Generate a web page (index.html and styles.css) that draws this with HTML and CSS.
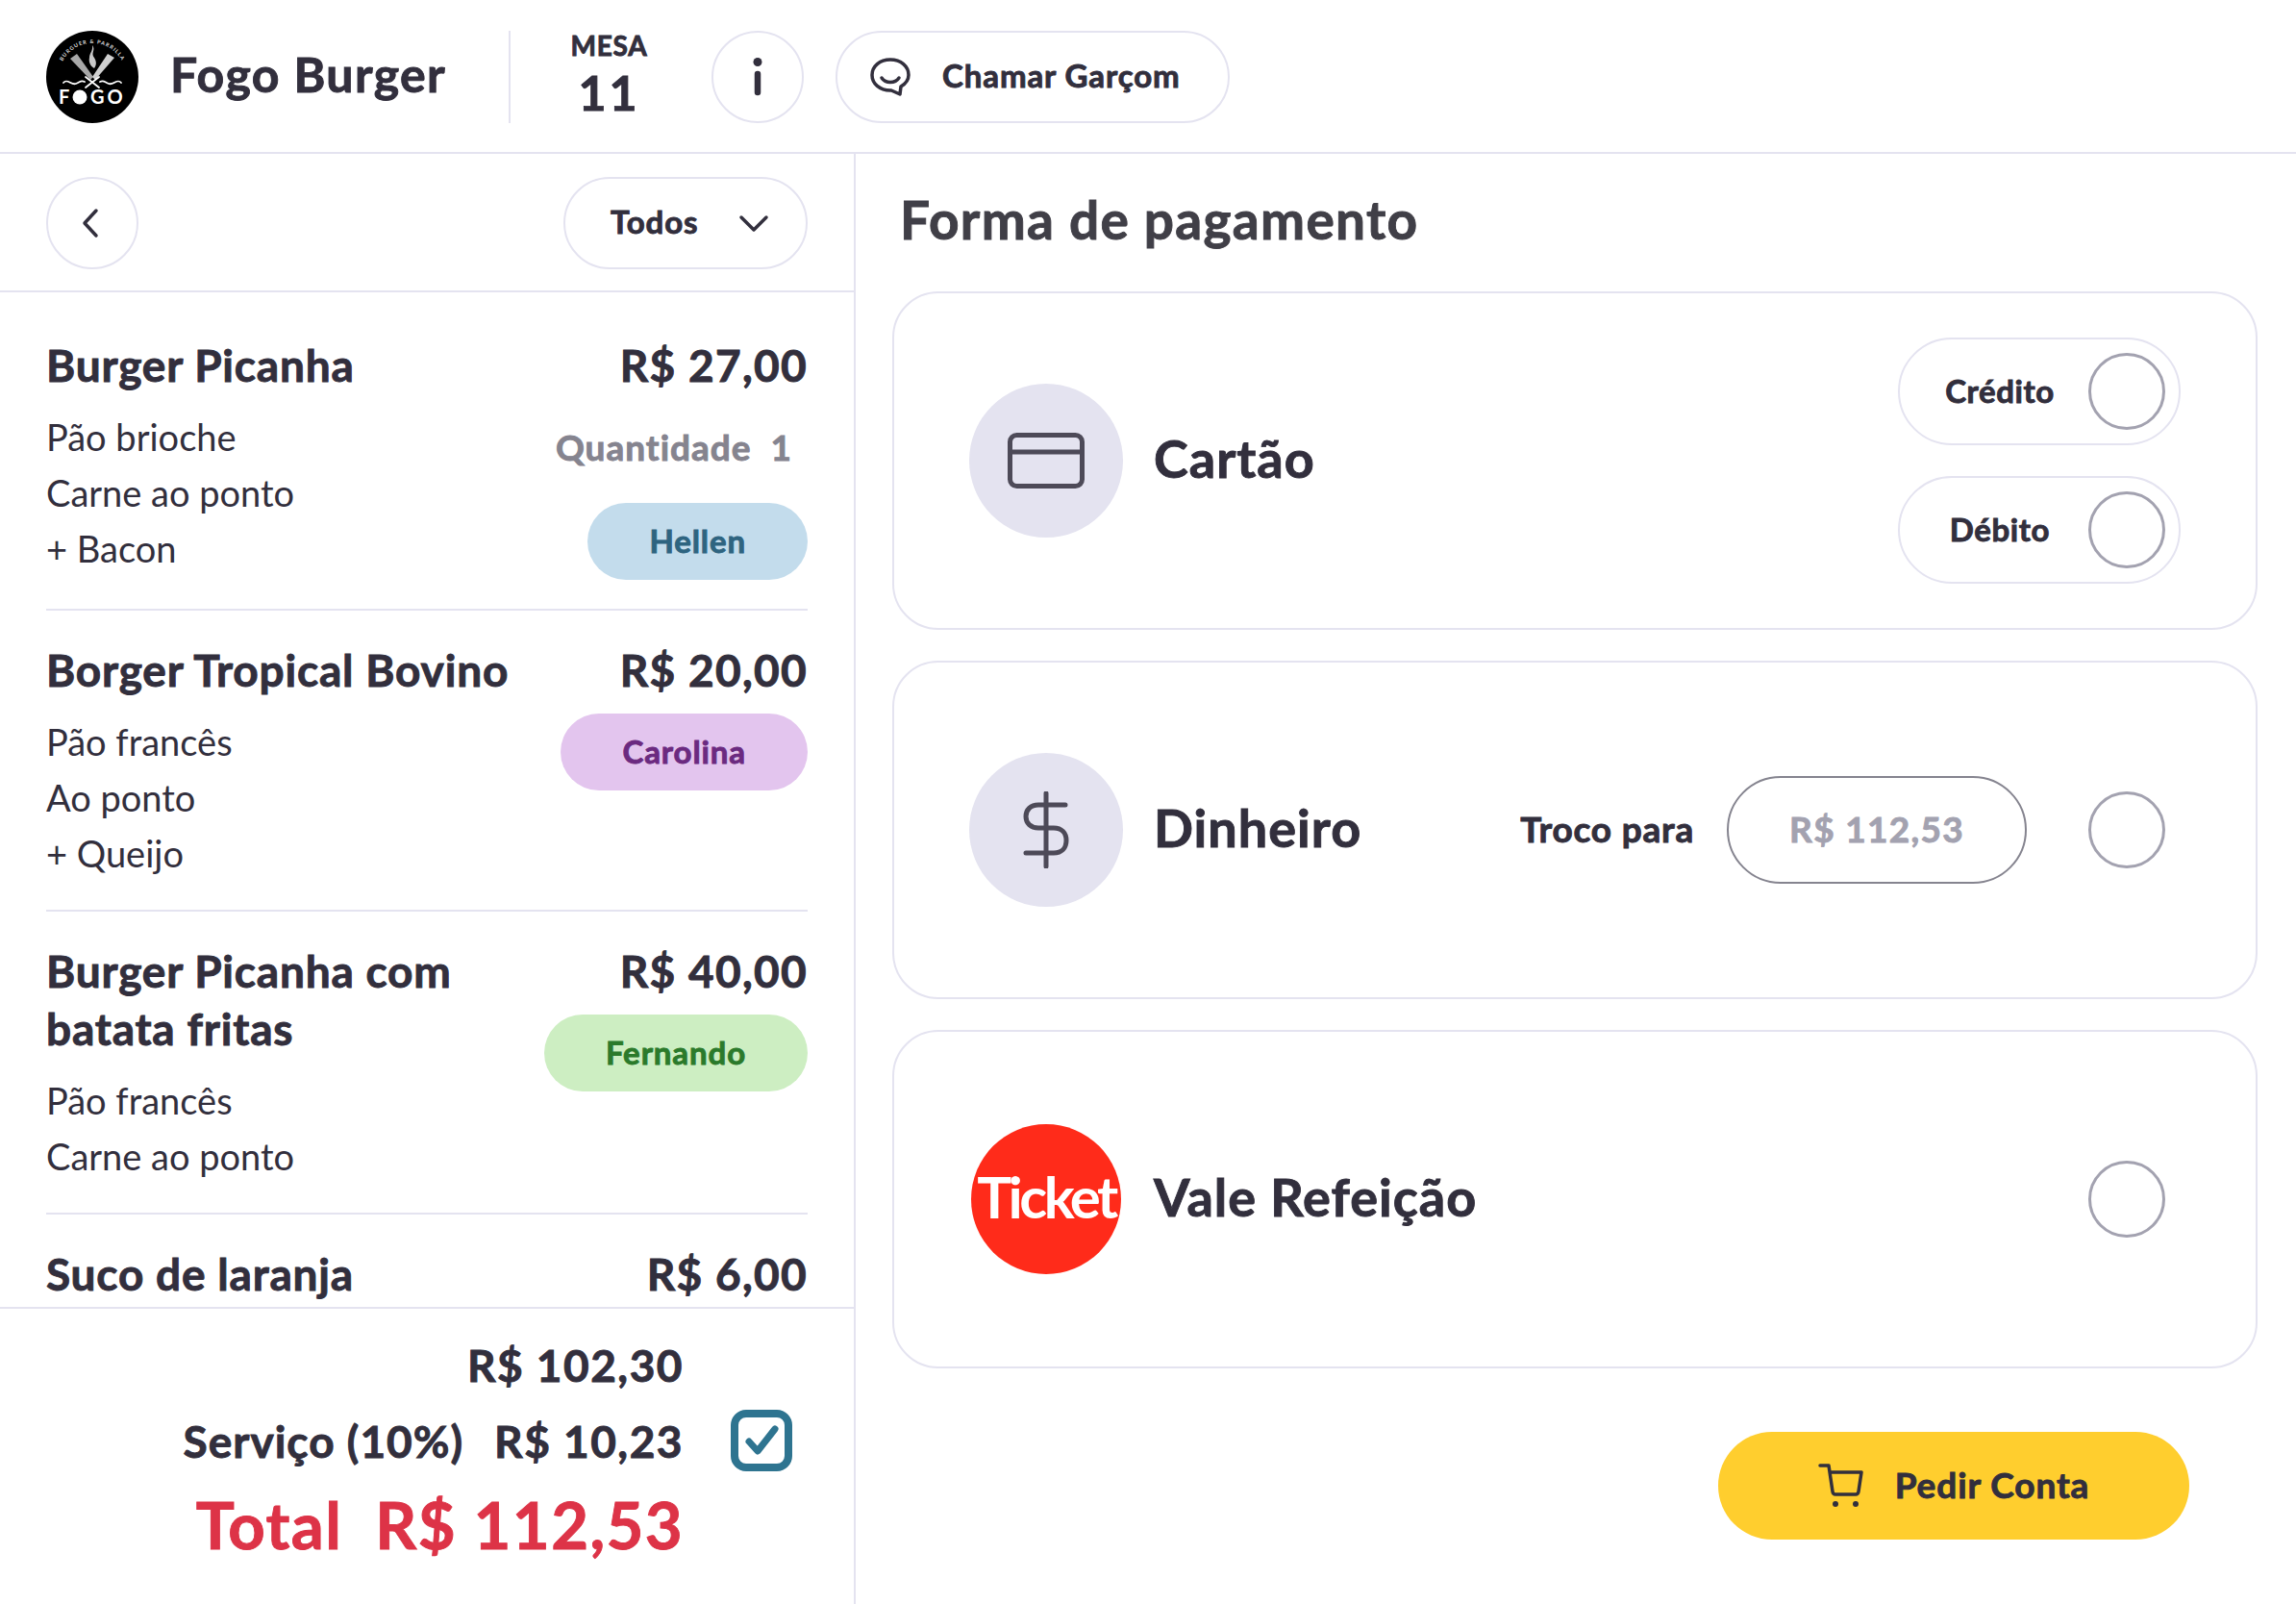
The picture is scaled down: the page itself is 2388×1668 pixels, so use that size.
FILE: index.html
```html
<!DOCTYPE html>
<html lang="pt-BR">
<head>
<meta charset="utf-8">
<title>Fogo Burger</title>
<link rel="stylesheet" href="styles.css">
</head>
<body>
<div class="app">
  <header class="topbar">
    <svg class="logo" viewBox="0 0 96 96">
      <circle cx="48" cy="48" r="48" fill="#000"/>
      <path id="arc" d="M13 48 A35 35 0 0 1 83 48" fill="none"/>
      <text class="logo-arc"><textPath href="#arc" startOffset="50%" text-anchor="middle">BURGUER &amp; PARRILLA</textPath></text>
      <path d="M48 15c4 5-2 8 2 13 2 3 3 7 0 11-4-2-6-7-5-11 0-5 4-7 3-13z" fill="#c8c8c8"/>
      <path d="M25 29l7-5 17 24-3 3z" fill="#a8a8a8"/>
      <path d="M71 28l-7-4-16 24 3 3z" fill="#cfcfcf"/>
      <path d="M18 54c4-5 8 3 13 1s5-4 9-2M78 54c-4-5-8 3-13 1s-5-4-9-2M41 48l14 11M55 48L41 59" fill="none" stroke="#fff" stroke-width="1.800" stroke-linecap="round"/>
      <text class="logo-word" x="13" y="76">F</text>
      <circle cx="35" cy="69" r="7.500" fill="#fff"/>
      <text class="logo-word" x="46" y="76">GO</text>
    </svg>
    <h1 class="brand">Fogo Burger</h1>
    <div class="table-info">
      <span class="table-label">MESA</span>
      <span class="table-number">11</span>
    </div>
    <button class="round-btn info-btn" aria-label="Informações">
      <svg width="12" height="40" viewBox="0 0 12 40"><circle cx="6" cy="4.500" r="4.500" fill="#322f3d"/><path d="M6 17v19" stroke="#322f3d" stroke-width="6.500" stroke-linecap="round"/></svg>
    </button>
    <button class="pill-btn waiter-btn">
      <svg width="42" height="40" viewBox="0 0 42 40" fill="none" stroke="#322f3d" stroke-width="3.500" stroke-linecap="round" stroke-linejoin="round"><path d="M21 2C10 2 2 9 2 18s8 16 19 16h1l9 4 1-8c5-3 8-7 8-12C40 9 32 2 21 2z"/><path d="M12 21c4 6 14 6 18 0"/></svg>
      <span class="btn-text">Chamar Garçom</span>
    </button>
  </header>

  <div class="content">
    <aside class="sidebar">
      <div class="side-tools">
        <button class="round-btn back-btn" aria-label="Voltar">
          <svg width="20" height="32" viewBox="0 0 20 32" fill="none" stroke="#322f3d" stroke-width="3.500" stroke-linecap="round" stroke-linejoin="round"><path d="M16 3L4 16l12 13"/></svg>
        </button>
        <button class="pill-btn filter-btn">
          <span class="btn-text">Todos</span>
          <svg width="32" height="20" viewBox="0 0 32 20" fill="none" stroke="#322f3d" stroke-width="3.500" stroke-linecap="round" stroke-linejoin="round"><path d="M3 4l13 13L29 4"/></svg>
        </button>
      </div>

      <div class="order-list">
        <article class="order-item">
          <div class="order-left">
            <h2 class="order-name">Burger Picanha</h2>
            <ul class="order-notes"><li>Pão brioche</li><li>Carne ao ponto</li><li>+ Bacon</li></ul>
          </div>
          <div class="order-right">
            <div class="order-price">R$ 27,00</div>
            <div class="order-qty">Quantidade&nbsp; 1</div>
            <div class="person person-blue">Hellen</div>
          </div>
        </article>
        <article class="order-item">
          <div class="order-left">
            <h2 class="order-name">Borger Tropical Bovino</h2>
            <ul class="order-notes"><li>Pão francês</li><li>Ao ponto</li><li>+ Queijo</li></ul>
          </div>
          <div class="order-right">
            <div class="order-price">R$ 20,00</div>
            <div class="person person-purple">Carolina</div>
          </div>
        </article>
        <article class="order-item">
          <div class="order-left">
            <h2 class="order-name">Burger Picanha com batata fritas</h2>
            <ul class="order-notes"><li>Pão francês</li><li>Carne ao ponto</li></ul>
          </div>
          <div class="order-right">
            <div class="order-price">R$ 40,00</div>
            <div class="person person-green">Fernando</div>
          </div>
        </article>
        <article class="order-item">
          <div class="order-left">
            <h2 class="order-name">Suco de laranja</h2>
          </div>
          <div class="order-right">
            <div class="order-price">R$ 6,00</div>
          </div>
        </article>
      </div>

      <div class="totals">
        <div class="totals-row">
          <span>R$ 102,30</span>
          <span class="check-slot"></span>
        </div>
        <div class="totals-row service-row">
          <span class="service-label">Serviço (10%)</span>
          <span>R$ 10,23</span>
          <span class="check-slot">
            <svg width="64" height="64" viewBox="0 0 64 64" fill="none" stroke="#2e7490"><rect x="4" y="4" width="56" height="56" rx="12" stroke-width="8"/><path d="M19 33l9 10 18-23" stroke-width="7" stroke-linecap="round" stroke-linejoin="round"/></svg>
          </span>
        </div>
        <div class="totals-row total-row">
          <span class="total-label">Total</span>
          <span>R$ 112,53</span>
          <span class="check-slot"></span>
        </div>
      </div>
    </aside>

    <main class="payment">
      <h2 class="payment-title">Forma de pagamento</h2>

      <section class="pay-card">
        <div class="pay-icon">
          <svg width="80" height="58" viewBox="0 0 80 58" fill="none" stroke="#4d4a58" stroke-width="5"><rect x="2.500" y="2.500" width="75" height="53" rx="7"/><path d="M2.500 20h75"/></svg>
        </div>
        <div class="pay-name">Cartão</div>
        <div class="card-options">
          <div class="card-option"><span class="card-option-label">Crédito</span><span class="radio"></span></div>
          <div class="card-option"><span class="card-option-label">Débito</span><span class="radio"></span></div>
        </div>
      </section>

      <section class="pay-card">
        <div class="pay-icon">
          <svg width="48" height="80" viewBox="0 0 48 80" fill="none" stroke="#4d4a58" stroke-width="5" stroke-linecap="round"><path d="M24 2v76M44 14H16C8 14 3 19 3 26s5 12 13 12h16c8 0 13 5 13 13s-5 13-13 13H3"/></svg>
        </div>
        <div class="pay-name">Dinheiro</div>
        <div class="change">
          <span class="change-label">Troco para</span>
          <div class="change-input">R$ 112,53</div>
        </div>
        <span class="radio"></span>
      </section>

      <section class="pay-card">
        <div class="pay-icon ticket-logo"><span>Ticket</span></div>
        <div class="pay-name">Vale Refeição</div>
        <span class="radio radio-end"></span>
      </section>

      <div class="actions">
        <button class="request-btn">
          <svg width="48" height="48" viewBox="0 0 48 48" fill="none" stroke="#322f3d" stroke-width="3.500" stroke-linecap="round" stroke-linejoin="round"><path d="M2 3h9l4 27c.3 2 1.500 3 3 3h21c1.500 0 2.700-1 3-3l3-20H12"/><circle cx="18" cy="43" r="3" fill="#322f3d" stroke="none"/><circle cx="39" cy="43" r="3" fill="#322f3d" stroke="none"/></svg>
          <span class="btn-text">Pedir Conta</span>
        </button>
      </div>
    </main>
  </div>
</div>
</body>
</html>
```

FILE: styles.css
```css
* { box-sizing: border-box; }
html, body { margin: 0; height: 100%; }
body {
  font-family: "Lato", "Noto Sans", sans-serif;
  color: #322f3d;
  background: #fff;
}
h1, h2, ul { margin: 0; padding: 0; }
ul { list-style: none; }
button { font: inherit; color: inherit; background: #fff; cursor: pointer; }

/* Heavier look than the installed bold gives */
.brand, .table-label, .table-number, .btn-text, .order-name, .order-price, .order-qty,
.person, .totals, .payment-title, .pay-name, .card-option-label, .change-label, .change-input {
  -webkit-text-stroke: 0.9px currentColor;
}

.app { width: 2388px; height: 1668px; display: flex; flex-direction: column; overflow: hidden; }

.topbar {
  height: 160px;
  flex: none;
  display: flex;
  align-items: center;
  padding: 2px 0 0 48px;
  border-bottom: 2px solid #e4e3f0;
}
.logo { width: 96px; height: 96px; flex: none; }
.logo-arc { font: 700 5.500px "Lato", sans-serif; fill: #ddd; letter-spacing: 1px; }
.logo-word { font: 700 20px "Lato", sans-serif; fill: #fff; letter-spacing: 3px; }
.brand { font-size: 50px; font-weight: 700; letter-spacing: 1.400px; margin-left: 33px; width: 354px; border-right: 2px solid #e4e3f0; height: 96px; line-height: 90px; white-space: nowrap; }
.table-info { width: 205px; display: flex; flex-direction: column; align-items: center; margin-top: -2px; }
.table-label { font-size: 28px; font-weight: 700; letter-spacing: .8px; line-height: 34px; margin-top: -3px; margin-bottom: 3px; }
.table-number { font-size: 50px; font-weight: 700; line-height: 58px; letter-spacing: 3px; }
.round-btn {
  width: 96px; height: 96px; flex: none;
  border: 2px solid #e4e3f0; border-radius: 50%;
  display: flex; align-items: center; justify-content: center; padding: 0;
}
.info-btn { margin-left: 4px; }
.back-btn { padding-right: 4px; }
.pill-btn {
  height: 96px; flex: none;
  border: 2px solid #e4e3f0; border-radius: 48px;
  display: flex; align-items: center;
  font-size: 33px; font-weight: 700;
}
.btn-text { letter-spacing: .9px; padding-bottom: 4px; }
.waiter-btn { width: 410px; margin-left: 33px; padding: 0 0 0 34px; gap: 33px; }

.content { flex: 1; min-height: 0; display: flex; }

.sidebar { width: 890px; flex: none; border-right: 2px solid #e4e3f0; display: flex; flex-direction: column; }
.side-tools {
  height: 144px; flex: none;
  padding: 24px 48px 0 48px;
  display: flex; justify-content: space-between; align-items: flex-start;
  border-bottom: 2px solid #e4e3f0;
}
.filter-btn { width: 254px; padding: 0 0 0 47px; gap: 42px; }

.order-list { flex: 1; min-height: 0; overflow: hidden; padding: 14px 48px 0 48px; }
.order-item { display: flex; justify-content: space-between; gap: 24px; padding: 32px 0 30px; border-bottom: 2px solid #e4e3f0; }
.order-left { flex: 1; min-width: 0; }
.order-name { font-size: 46px; font-weight: 700; letter-spacing: .8px; line-height: 60px; }
.order-notes { margin-top: 15px; font-size: 38px; line-height: 58px; }
.order-right { flex: none; display: flex; flex-direction: column; align-items: flex-end; }
.order-price { font-size: 46px; font-weight: 700; letter-spacing: 1.300px; line-height: 60px; white-space: nowrap; }
.order-qty { margin: 26px 16px 14px 0; font-size: 37px; font-weight: 700; letter-spacing: 1px; line-height: 58px; color: #85848f; }
.person {
  margin-top: 15px; height: 80px; border-radius: 40px;
  display: flex; align-items: center; justify-content: flex-end;
  padding: 0 64px 2px; font-size: 33px; font-weight: 700; letter-spacing: .9px;
}
.person-blue { background: #c3dcec; color: #2e6480; }
.person-purple { background: #e3c5ee; color: #6b2a80; }
.person-green { background: #cdeec2; color: #2b7a2b; }

.totals { height: 309px; flex: none; border-top: 2px solid #e4e3f0; padding: 26px 64px 0 0; font-weight: 700; font-size: 46px; letter-spacing: 1.500px; }
.totals-row { display: flex; justify-content: flex-end; align-items: center; height: 64px; margin-bottom: 15px; }
.check-slot { width: 64px; height: 64px; margin-left: 49px; flex: none; }
.service-label { margin-right: 32px; letter-spacing: 1px; }
.total-row { font-size: 67px; color: #dd3347; height: 80px; margin-top: 6px; letter-spacing: 1.400px; }
.total-label { margin-right: 34px; }

.payment { flex: 1; min-width: 0; padding: 0 40px 0 38px; }
.payment-title { font-size: 55px; font-weight: 700; letter-spacing: 1.300px; color: #403f47; line-height: 60px; margin: 38px 0 45px 8px; height: 60px; white-space: nowrap; }
.pay-card {
  height: 352px; margin-bottom: 32px;
  border: 2px solid #e4e3f0; border-radius: 48px;
  display: flex; align-items: center;
  padding: 0 94px 0 78px;
}
.pay-icon {
  width: 160px; height: 160px; flex: none; border-radius: 50%;
  background: #e4e3f0;
  display: flex; align-items: center; justify-content: center;
}
.pay-name { font-size: 54px; font-weight: 700; letter-spacing: 1px; margin-left: 32px; padding-bottom: 6px; white-space: nowrap; }
.card-options { margin-left: auto; margin-right: -16px; display: flex; flex-direction: column; gap: 32px; }
.card-option {
  width: 294px; height: 112px;
  border: 2px solid #e4e3f0; border-radius: 56px;
  display: flex; align-items: center; padding: 0 14px 0 12px;
}
.card-option-label { flex: 1; text-align: center; font-size: 33px; font-weight: 700; letter-spacing: .6px; padding-bottom: 2px; }
.radio { width: 80px; height: 80px; flex: none; border: 3px solid #a3a2b0; border-radius: 50%; background: #fff; display: block; }
.radio-end { margin-left: auto; }
.change { margin-left: auto; margin-right: 64px; display: flex; align-items: center; gap: 34px; }
.change-label { font-size: 37px; font-weight: 700; letter-spacing: .8px; padding-bottom: 4px; }
.change-input {
  width: 312px; height: 112px;
  border: 2px solid #85848f; border-radius: 56px;
  display: flex; align-items: center; justify-content: center;
  padding-bottom: 4px;
  font-size: 37px; font-weight: 700; color: #a3a2b0; letter-spacing: 1.300px;
}
.ticket-logo { width: 156px; height: 156px; margin: 0 2px; background: #ff2b1a; overflow: hidden; padding-bottom: 6px; }
.ticket-logo span { color: #fff; font-size: 60px; font-weight: 700; letter-spacing: -3.500px; line-height: 1; white-space: nowrap; }
.ticket-logo + .pay-name { margin-left: 32px; }

.actions { display: flex; justify-content: flex-end; padding: 34px 71px 0 0; }
.request-btn {
  width: 490px; height: 112px; border: 0; border-radius: 56px;
  background: #ffce2e;
  display: flex; align-items: center; justify-content: center; gap: 32px;
  font-size: 37px; font-weight: 700;
}
```
